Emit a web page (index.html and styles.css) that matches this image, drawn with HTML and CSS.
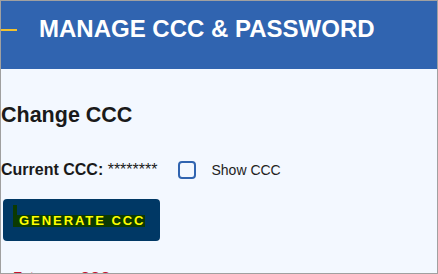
FILE: index.html
```html
<!DOCTYPE html>
<html>
<head>
<meta charset="utf-8">
<link rel="stylesheet" href="styles.css">
</head>
<body>
<div class="frame">
  <header class="topbar">
    <span class="accent"></span>
    <h1 class="title">MANAGE CCC &amp; PASSWORD</h1>
  </header>
  <main class="content">
    <h2 class="section-title">Change CCC</h2>
    <div class="ccc-row">
      <span class="ccc-value"><b>Current CCC:</b> ********</span>
      <label class="toggle"><span class="box"></span><span class="toggle-text">Show CCC</span></label>
    </div>
    <button class="gen-btn"><span class="gen-label">GENERATE CCC</span></button>
    <p class="hint">Enter new CCC</p>
  </main>
</div>
</body>
</html>
```
FILE: styles.css
```css
html, body {
  margin: 0;
  padding: 0;
}
body {
  font-family: "Liberation Sans", Arial, sans-serif;
  background: #f3f8ff;
}
.frame {
  width: 438px;
  height: 274px;
  box-sizing: border-box;
  border: 1px solid #a0a0a0;
  overflow: hidden;
  background: #f3f8ff;
}
.topbar {
  height: 68px;
  box-sizing: border-box;
  background: #3064b0;
  display: flex;
  align-items: flex-start;
  padding-top: 14px;
}
.accent {
  display: block;
  width: 16px;
  height: 2px;
  background: #f2c12e;
  margin-top: 14px;
}
.title {
  margin: 0 0 0 22px;
  font-size: 24px;
  line-height: 28px;
  font-weight: bold;
  color: #ffffff;
}
.content {
  padding: 0;
}
.section-title {
  margin: 34px 0 0 0;
  font-size: 21.5px;
  font-weight: bold;
  line-height: 25px;
  color: #1a1a1a;
}
.ccc-row {
  margin-top: 33px;
  display: flex;
  align-items: center;
  height: 18px;
}
.ccc-value {
  font-size: 16px;
  line-height: 18px;
  color: #1a1a1a;
}
.toggle {
  display: flex;
  align-items: center;
  margin-left: 21px;
}
.box {
  display: block;
  width: 18px;
  height: 18px;
  box-sizing: border-box;
  border: 2px solid #3064b0;
  border-radius: 4px;
}
.toggle-text {
  margin-left: 15px;
  font-size: 14px;
  line-height: 16px;
  color: #222222;
}
.gen-btn {
  display: flex;
  align-items: center;
  margin: 20px 0 0 2px;
  width: 157px;
  height: 42px;
  padding: 0 0 0 10px;
  border: none;
  border-radius: 4px;
  background: #003865;
  font-family: "Liberation Sans", Arial, sans-serif;
}
.gen-label {
  position: relative;
  display: inline-block;
  padding-left: 6px;
  line-height: 12px;
  height: 12px;
  margin-top: 2px;
  background: #0c3a02;
  color: #ffff00;
  font-size: 13px;
  font-weight: bold;
  letter-spacing: 1.95px;
}
.gen-label::before {
  content: "";
  position: absolute;
  left: 0;
  top: -10px;
  width: 4px;
  height: 10px;
  background: #0c3a02;
}
.hint {
  margin: 28px 0 0 12px;
  font-size: 14px;
  line-height: 16px;
  color: #c8102e;
}
```
